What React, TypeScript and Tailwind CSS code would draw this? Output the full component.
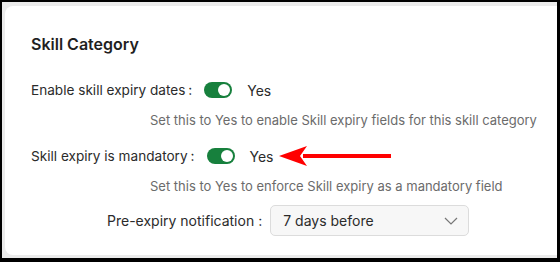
import React from "react";

function Toggle() {
  return (
    <div className="w-[28px] h-[16px] rounded-full bg-[#17803d] flex items-center justify-end pr-[2px]">
      <div className="w-[12px] h-[12px] rounded-full bg-white" />
    </div>
  );
}

function Arrow() {
  return (
    <svg width="114" height="24" viewBox="0 0 114 24" className="ml-[5px]">
      <path d="M24 10 L112 10 L112 14 L24 14 Z" fill="#ff0000" />
      <path d="M0 12 L28 2 L21 12 L28 22 Z" fill="#ff0000" />
    </svg>
  );
}

export default function App() {
  return (
    <div
      className="w-[560px] h-[262px] border-l-2 border-t-2 border-r-[3px] border-b-4 border-black bg-[#ebebeb] flex flex-col pt-[4px] pl-[3px] pb-[3px]"
      style={{ fontFamily: "Inter, 'Noto Sans', sans-serif" }}
    >
      <div className="flex-1 bg-white rounded-l-[8px] flex flex-col pl-[26px] pt-[28px] text-[#2b2b2b]">
        <div className="text-[16px] leading-[20px] font-semibold text-[#1f1f1f]">Skill Category</div>

        <div className="mt-[24px] flex items-center h-[24px] text-[13.6px]">
          <span>Enable skill expiry dates</span>
          <span className="ml-[3px]">:</span>
          <div className="ml-[12px]"><Toggle /></div>
          <span className="ml-[15px] text-[14px]">Yes</span>
        </div>

        <div className="mt-[9px] ml-[119px] text-[13px] leading-[18px] text-[#6b6b6b]">
          Set this to Yes to enable Skill expiry fields for this skill category
        </div>

        <div className="mt-[15px] flex items-center h-[24px] text-[13.6px]">
          <span>Skill expiry is mandatory</span>
          <span className="ml-[3px]">:</span>
          <div className="ml-[12px]"><Toggle /></div>
          <span className="ml-[15px] text-[14px]">Yes</span>
          <Arrow />
        </div>

        <div className="mt-[9px] ml-[119px] text-[13px] leading-[18px] text-[#6b6b6b]">
          Set this to Yes to enforce Skill expiry as a mandatory field
        </div>

        <div className="mt-[10px] ml-[76px] flex items-center text-[14px]">
          <span>Pre-expiry notification</span>
          <span className="ml-[4px]">:</span>
          <div className="ml-[8px] w-[199px] h-[31px] rounded-[5px] border border-[#dcdcdc] bg-[#f7f7f7] flex items-center justify-between pl-[12px] pr-[10px]">
            <span className="text-[14px] text-[#2b2b2b]">7 days before</span>
            <svg width="14" height="8" viewBox="0 0 14 8">
              <path d="M1 1 L7 7 L13 1" fill="none" stroke="#777" strokeWidth="1.2" />
            </svg>
          </div>
        </div>
      </div>
    </div>
  );
}
